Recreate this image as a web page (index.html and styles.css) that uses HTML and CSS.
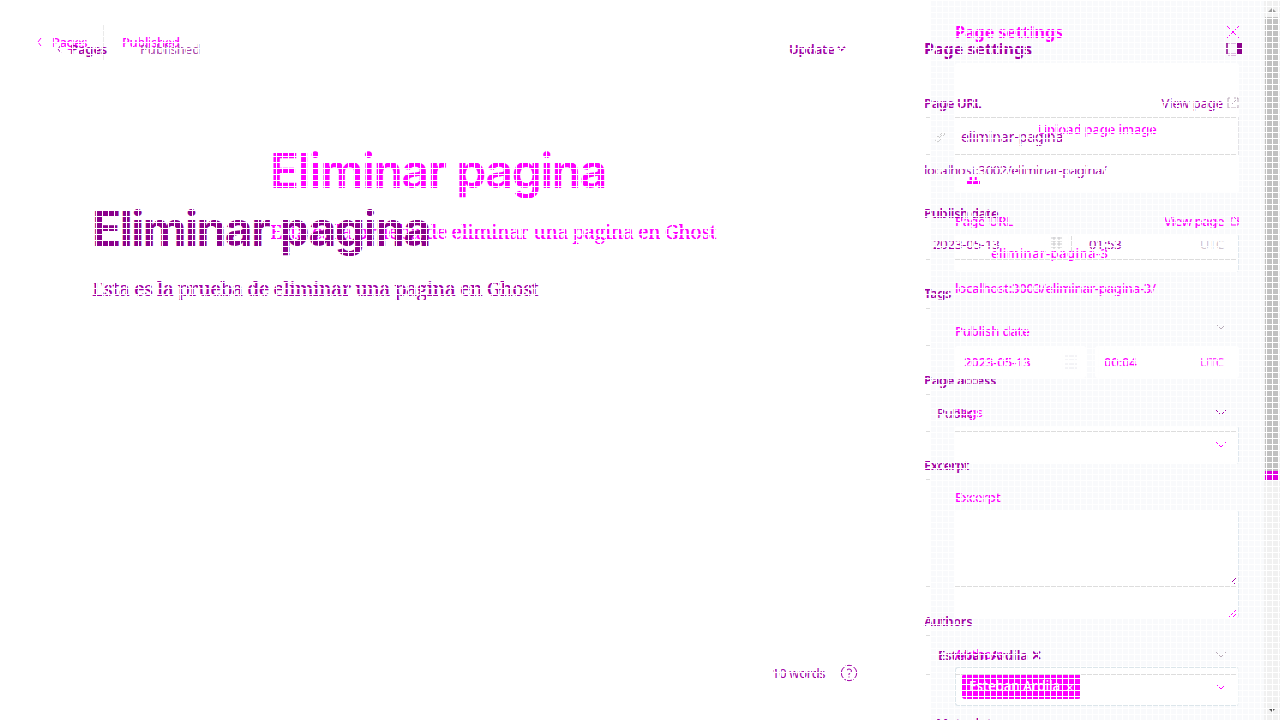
FILE: index.html
```html
<!DOCTYPE html>
<html lang="en">
<head>
<meta charset="utf-8">
<title>Page settings</title>
<link rel="stylesheet" href="styles.css">
</head>
<body>
<div class="stage">
  <div class="panel-bg"></div>

  <div class="layer before">
    <main class="editor">
      <header class="bar"><svg class="back" width="5" height="8"><path d="M4 0 1 4 4 8"/></svg><span class="crumb">Pages</span><i class="sep"></i><span class="status">Published</span></header>
      <h1>Eliminar pagina</h1>
      <p class="body">Esta es la prueba de eliminar una pagina en Ghost</p>
    </main>
    <aside class="side">
      <div class="head"><b>Page settings</b><svg width="12" height="12"><path d="M0 0 12 12M12 0 0 12"/></svg></div>
      <div class="box upload">Upload page image<i class="basket"></i></div>
      <div class="label l1"><span>Page URL</span><span class="view">View page<svg width="9" height="9"><path d="M3 1H1V8H8V5M4 0 9 5M8 0V5"/></svg></span></div>
      <div class="box url edge">eliminar-pagina-3</div>
      <div class="hint">localhost:3003/eliminar-pagina-3/</div>
      <div class="label l2">Publish date</div>
      <div class="dates"><div class="box"><span>2023-05-13</span><svg class="cal" width="12" height="14"><path d="M0 1H12M0 5H12M0 9H12M0 13H12"/></svg></div><div class="box"><span>00:04</span><span class="utc">UTC</span></div></div>
      <div class="label l3">Tags</div>
      <div class="box select edge"><svg class="chev" width="10" height="6"><path d="M0 0 5 5 10 0"/></svg></div>
      <div class="label l4">Excerpt</div>
      <div class="box area edge"><svg width="8" height="8"><path d="M0 7 7 0M4 7 7 4"/></svg></div>
      <div class="label l5">Authors</div>
      <div class="box authors"><span class="tag">Esteban Ardila <small>✕</small></span><svg class="chev" width="10" height="6"><path d="M0 0 5 5 10 0"/></svg></div>
    </aside>
  </div>

  <div class="layer after">
    <main class="editor">
      <header class="bar"><svg class="back" width="5" height="8"><path d="M4 0 1 4 4 8"/></svg><b class="crumb">Pages</b><span class="status">Published</span><b class="update">Update</b><svg class="down" width="9" height="6"><path d="M1 1 4.5 4 8 1"/></svg></header>
      <h1>Eliminar pagina</h1>
      <p class="body">Esta es la prueba de eliminar una pagina en Ghost</p>
      <footer class="foot"><span>10 words</span><svg width="18" height="18"><circle cx="9" cy="9" r="7.7"/><path d="M6.5 7Q6.5 5 9 5T11.5 7Q11.5 8.5 9 9.5V11M9 12.5V13.5"/></svg></footer>
    </main>
    <aside class="side">
      <div class="head"><b>Page settings</b><svg width="16" height="14"><path d="M0 .5H16M1 0V13M2 12.5H11"/><path class="solid" d="M11 1H16V13H11Z"/></svg></div>
      <div class="label m1"><span>Page URL</span><span class="view">View page<svg width="12" height="12"><path d="M4 1H1V11H11V8M5 7 11 1M7 1H11V5"/></svg></span></div>
      <div class="field top low url"><svg class="link" width="14" height="14"><path d="M2 9 5 6 8 9 5 12 2 10M7 5 10 2 12 4 9 7M5 9 9 5"/></svg>eliminar-pagina</div>
      <div class="hint">localhost:3002/eliminar-pagina/</div>
      <div class="label m2">Publish date</div>
      <div class="field low dates"><span class="day">2023-05-13</span><svg class="cal" width="11" height="13"><path d="M0 1H11M0 4H11M0 7H11M0 10H11M3 0V12M8 0V12"/></svg><i class="sep"></i><span class="hour">01:53</span><span class="utc">UTC</span></div>
      <div class="label m3">Tags</div>
      <div class="field short select pale"><svg class="chev" width="10" height="6"><path d="M0 0 5 5 10 0"/></svg></div>
      <div class="label m4">Page access</div>
      <div class="field low select">Public<svg class="chev" width="10" height="6"><path d="M0 0 5 5 10 0"/></svg></div>
      <div class="label m5">Excerpt</div>
      <div class="field low area"><svg width="8" height="8"><path d="M0 7 7 0M4 7 7 4"/></svg></div>
      <div class="label m6">Authors</div>
      <div class="field low authors pale"><b>Esteban Ardila ✕</b><svg class="chev" width="10" height="6"><path d="M0 0 5 5 10 0"/></svg></div>
      <div class="more">Meta data</div>
    </aside>
  </div>

  <div class="scroll"><i class="up"></i><div class="thumb"></div><i class="dn"></i></div>
  <div class="mesh"></div>
</div>
</body>
</html>
```
FILE: styles.css
```css
*{box-sizing:border-box}
body{margin:0;background:#fff;overflow:hidden;font:13px/18px "Noto Sans","Open Sans",sans-serif;letter-spacing:-.12px}
.stage{display:grid;grid-template:720px/1280px;overflow:hidden}
.stage>*{grid-area:1/1}
.panel-bg{background:#f9fafc;margin-left:931px;width:333px}
.layer{display:flex;white-space:nowrap;overflow:hidden;isolation:isolate}
.before{color:#f0f;font-weight:500}
.after{color:#a000a4}
svg{fill:none;stroke:currentColor;stroke-width:1;flex:none}
.solid{fill:currentColor;stroke:none}
.bar,.head,.label,.hint,.field,.box,.foot{display:flex;align-items:center}
h1{margin:0;font-family:Inter,"Noto Sans",sans-serif;font-size:48px;line-height:60px}
.body{margin:0;font-family:"Noto Serif","Liberation Serif",serif;font-size:19.5px;line-height:28px;letter-spacing:-.55px}
.chev,.cal,.utc{margin-left:auto}

.before .editor{width:955px}
.before .bar{height:83px;padding-left:37px;letter-spacing:-.4px}
.before .crumb{margin-left:10px;width:51px}
.before .sep{width:1px;height:36px;background:#eaeaea;margin-right:18px}
.before h1{margin:58px 0 0 270px;font-weight:600;letter-spacing:-1.3px}
.before .body{margin:17px 0 0 270px;font-weight:500}
.before .side{width:284px}
.before .head{height:63px;justify-content:space-between;font-size:16px;letter-spacing:0}
.before .box{background:#fff;border-radius:3px}
.before .upload{height:130px;justify-content:center;position:relative;padding-top:2px}
.basket{position:absolute;left:12px;top:114px;width:13px;height:7px;background:#f0f;clip-path:polygon(0 45%,20% 45%,20% 0,40% 0,40% 60%,60% 60%,60% 0,75% 0,75% 45%,100% 45%,100% 100%,0 100%)}
.before .l1{height:41px;padding-top:15px;justify-content:space-between}
.view{display:flex;align-items:center;gap:6px}
.before .l1 .view{letter-spacing:-.4px}
.before .url{height:38px;padding-left:36px;letter-spacing:.45px}
.before .edge{border-right:1px solid #e0e8ef}
.before .hint{height:32px;letter-spacing:-.26px}
.before .l2{height:42px;padding-top:12px;letter-spacing:-.2px}
.before .dates{display:grid;grid-template-columns:131px 144px;gap:9px;height:32px}
.dates .box{padding:0 9px}
.dates .box .utc{margin-right:6px;opacity:.7}
.before .cal{color:#e8e8ee}
.before .l3{height:48px;padding-top:20px}
.before .select{height:38px;padding-right:12px}
.before .l4{height:46px;padding-top:20px}
.before .area{height:108px;align-items:flex-end;justify-content:flex-end;padding:2px 1px 0}
.before .l5{height:49px;padding-top:23px}
.before .authors{height:39px;padding:0 12px 0 6px;border:1px solid #dce6eb;border-right-color:#f1f5f7}
.tag{background:#f0f;color:#fff;height:25px;width:119px;border-radius:3px;padding:3px 7px;font-size:13.5px}
.tag small{font-size:9px;margin-left:3px}

.after .editor{width:924px;display:flex;flex-direction:column}
.after .bar{height:98px;padding-left:57px}
.after .crumb{font-weight:600;margin-left:8px;width:70px}
.after .status{width:649px;color:#a844a8;letter-spacing:0}
.after .update{font-weight:600;width:48px}
.after .down{stroke-width:2}
.after h1{color:#8b008b;margin:101px 0 0 92px;font-weight:700;letter-spacing:-1.5px}
.after .body{margin:16px 0 0 92px;font-weight:500}
.foot{margin:auto 0 38px 772px;height:18px;letter-spacing:-.3px}
.foot span{width:68px}
.after .side{width:315px}
.after .head{height:89px;padding-top:9px;justify-content:space-between;font-size:16px;letter-spacing:0;margin-right:-3px}
.after .head svg{color:#8b008b;stroke-width:1.5}
.after .label{font-weight:600;letter-spacing:-.35px}
.after .m1{height:28px;justify-content:space-between}
.after .m1 .view{gap:4px;font-weight:400;letter-spacing:-.1px}
.after .view svg{color:#b9a9b9}
.field{--t:transparent;--b:transparent;position:relative}
.field::before,.field::after{content:"";position:absolute;left:0;right:0;height:1px;background:linear-gradient(90deg,transparent 2px,#ddd 2px 6px,transparent 6px 31px,var(--line) 31px 313px,transparent 313px)}
.field::before{top:0;--line:var(--t)}
.field::after{bottom:0;--line:var(--b)}
.field.dates::before{display:none}
.top{--t:#ddd}
.low{--b:#ddd}
.after .url{height:38px;padding:2px 0 0 9px;gap:14px;border-right:1px solid #e4e4e8;font-size:14px;letter-spacing:-.1px}
.link{color:#ccc}
.after .hint{height:30px;letter-spacing:-.38px}
.after .m2{height:42px;padding-top:14px}
.after .dates{height:33px;padding-left:9px}
.day{width:118px}
.after .cal{margin:0;color:#c9c9cc}
.after .sep{width:1px;height:16px;background:#ddd;margin:0 17px 0 9px}
.after .utc{color:#cfc4cf;margin-right:15px}
.after .m3{height:48px;padding-top:18px}
.after .select{height:38px;padding:0 13px}
.pale .chev{color:#b7aab7}
.after .m4{height:48px;padding-top:20px}
.after .m5{height:47px;padding-top:19px}
.after .area{height:108px;align-items:flex-end;justify-content:flex-end;padding:2px 1px}
.after .m6{height:48px;padding-top:20px}
.after .authors{height:40px;padding:0 13px 0 14px}
.authors b{font-weight:600;font-size:13px;letter-spacing:-.1px}
.more{margin:39px 0 0 12px;font-weight:600}

.scroll{margin-left:1264px;width:16px;background:#f1f1f1;display:flex;flex-direction:column;align-items:center;justify-content:space-between;padding:8px 0}
.thumb{width:14px;height:463px;background:linear-gradient(#c1c1c1 454px,#e000e0 454px);margin:5px 0 auto}
.up,.dn{border:4px solid transparent}
.up{border-width:0 4px 4px;border-bottom-color:#999}
.dn{border-width:4px 4px 0;border-top-color:#505050}
.mesh{background:repeating-linear-gradient(90deg,#fff 0 1px,transparent 1px 6px),repeating-linear-gradient(#fff 0 1px,transparent 1px 6px);z-index:5}
```
